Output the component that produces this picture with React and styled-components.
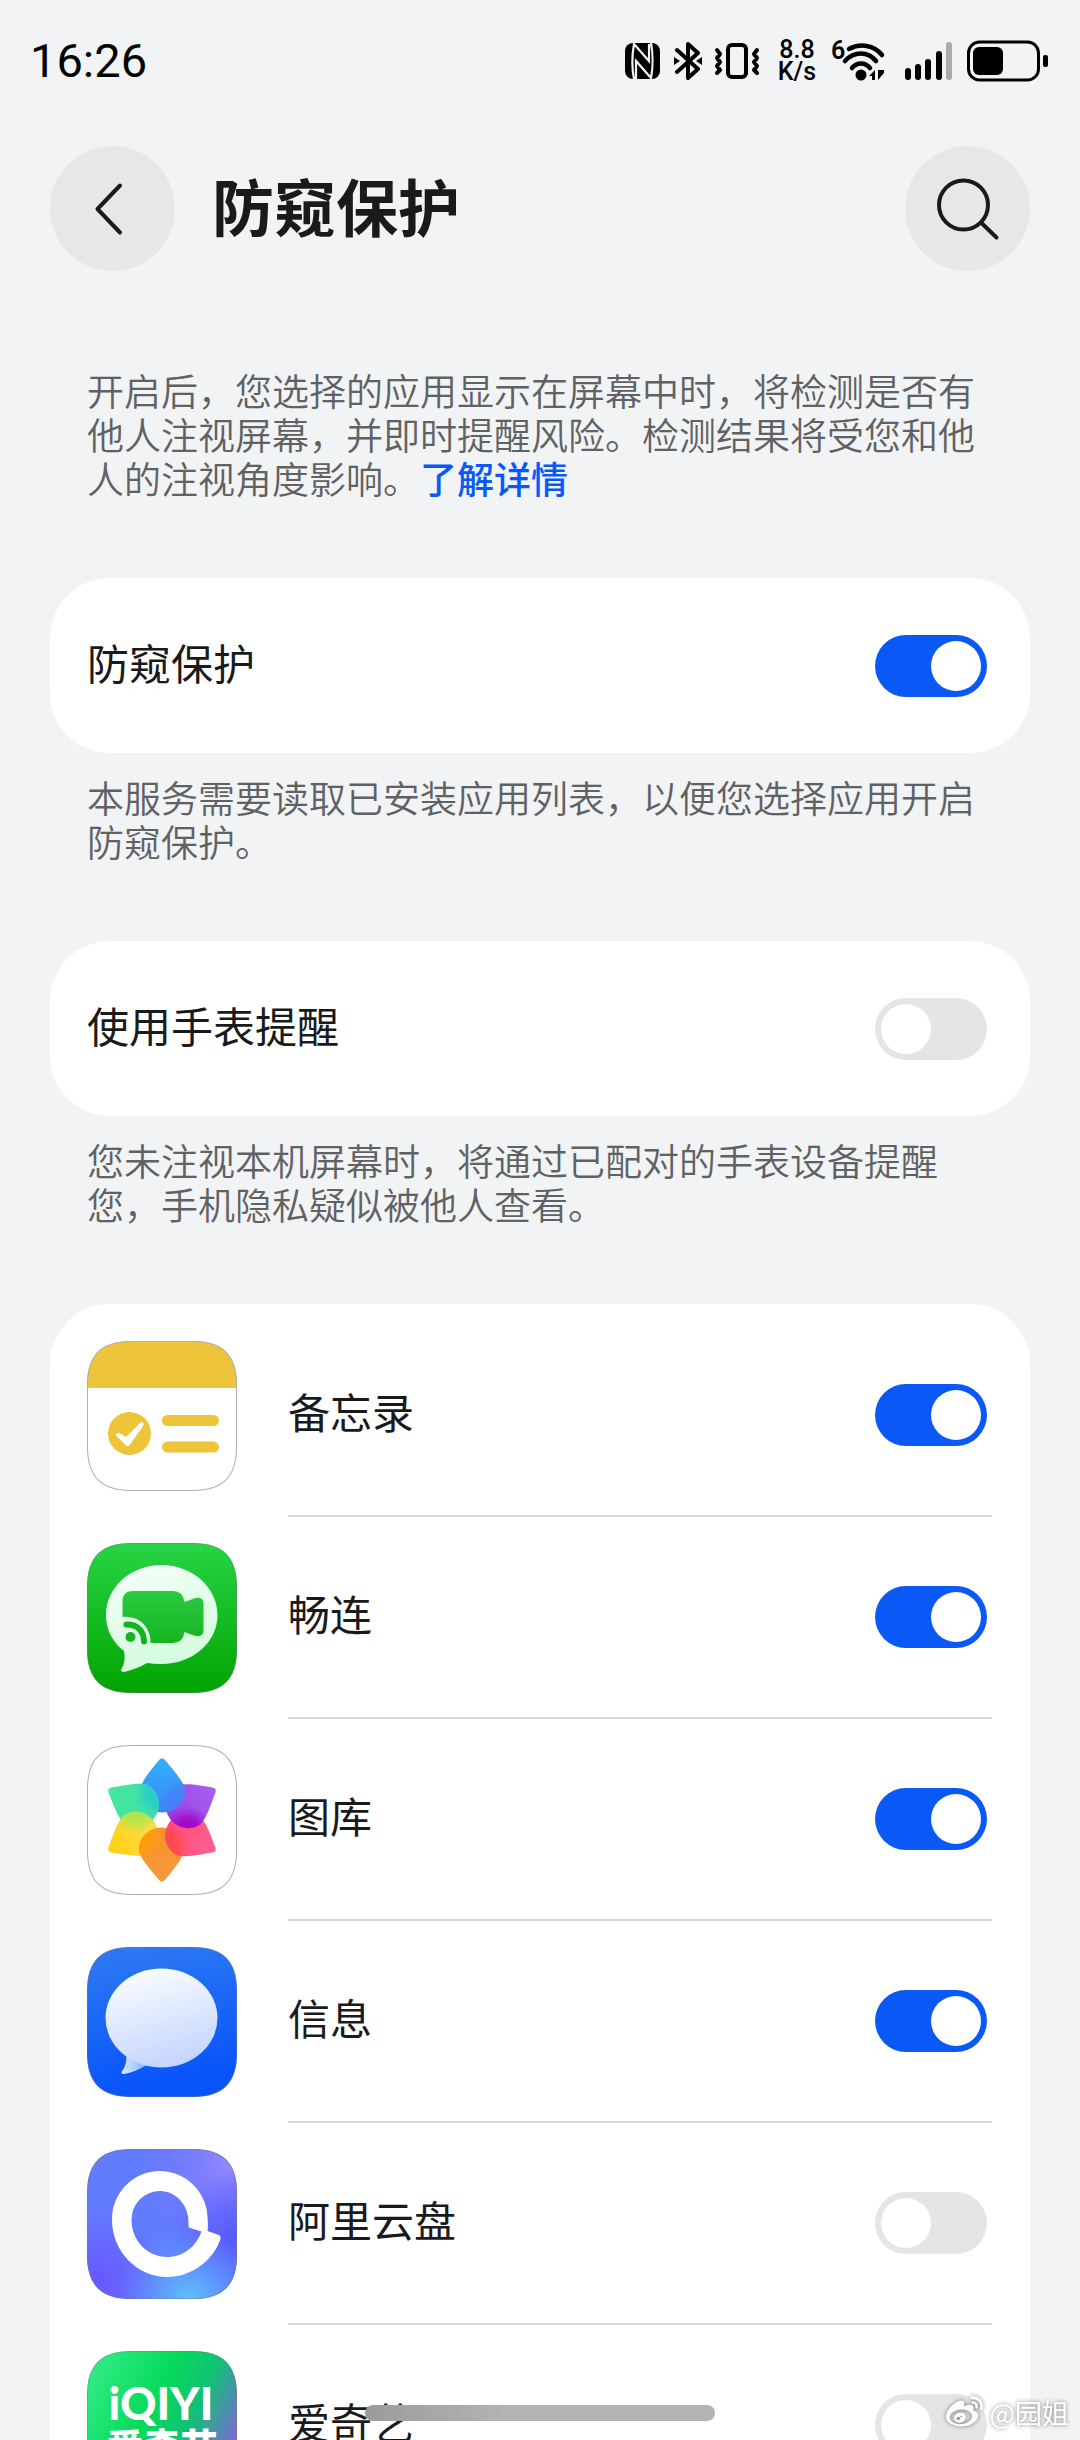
import { useState } from "react";
import { FaWeibo } from "react-icons/fa";
import styled, { createGlobalStyle } from "styled-components";

const GlobalStyle = createGlobalStyle`
	* {
		box-sizing: border-box;
	}

	body {
		margin: 0;
		background: #f1f3f5;
		color: #191a1c;
		font-family: Roboto, "Noto Sans CJK SC", sans-serif;
	}

	h1,
	p,
	ul {
		margin: 0;
		padding: 0;
	}
`;

const Screen = styled.div`
	position: relative;
	display: flex;
	flex-direction: column;
	height: 100vh;
	overflow: hidden;
`;

const StatusBar = styled.div`
	display: flex;
	align-items: center;
	justify-content: space-between;
	height: 122px;
	flex-shrink: 0;
	padding: 0 31px 0 30px;
	color: #000;
`;
const Clock = styled.time`
	font-size: 47px;
	line-height: 56px;
`;
const StatusIcons = styled.div`
	display: flex;
	align-items: center;

	& svg {
		display: block;
	}
`;
const NetSpeed = styled.div`
	width: 40px;
	margin: 0 15px 0 17px;
	font-size: 25px;
	line-height: 22px;
	text-align: center;
	font-weight: 500;
`;

const Header = styled.header`
	display: flex;
	align-items: center;
	flex-shrink: 0;
	gap: 37px;
	padding: 24px 50px 0;
`;
const Title = styled.h1`
	flex: 1;
	padding-bottom: 8px;
	font-family: "Noto Sans CJK SC", sans-serif;
	font-size: 62px;
	font-weight: 700;
	line-height: 72px;
`;
const RoundButton = styled.button`
	display: flex;
	align-items: center;
	justify-content: center;
	width: 125px;
	height: 125px;
	padding: 0;
	border: none;
	border-radius: 50%;
	background: #e6e7e9;
	cursor: pointer;
`;

const Content = styled.main`
	flex: 1;
	min-height: 0;
	overflow-y: auto;
	padding: 97px 50px 0;
	scrollbar-width: none;
	font-family: "Noto Sans CJK SC", sans-serif;
`;
const Note = styled.p`
	padding: 0 37px;
	margin-bottom: 78px;
	color: #606163;
	font-size: 37px;
	line-height: 44px;
	font-weight: 350;

	& a {
		color: #0a59f7;
		font-weight: 500;
		text-decoration: none;
	}
`;
const Label = styled.span`
	padding-bottom: 8px;
	font-size: 42px;
	line-height: 56px;
`;
const Card = styled.label`
	display: flex;
	align-items: center;
	justify-content: space-between;
	height: 175px;
	margin-bottom: 22px;
	padding: 0 43px 0 37px;
	border-radius: 60px;
	background: #fff;
	cursor: pointer;
`;

const AppList = styled.ul`
	padding: 11px 38px 37px 37px;
	border-radius: 60px;
	background: #fff;
	list-style-type: none;
`;
const AppRow = styled.li`
	& label {
		display: flex;
		align-items: center;
		gap: 51px;
		cursor: pointer;
	}

	& svg {
		flex-shrink: 0;
		width: 150px;
		height: 150px;
	}
`;
const AppInfo = styled.div`
	display: flex;
	flex: 1;
	align-items: center;
	justify-content: space-between;
	height: 202px;
	padding-right: 5px;
	border-bottom: 2px solid #d8d8d9;

	${AppRow}:last-child & {
		border-color: transparent;
	}
`;

const Switch = styled.input`
	appearance: none;
	display: flex;
	flex-shrink: 0;
	width: 112px;
	height: 62px;
	margin: 0;
	padding: 6px;
	border-radius: 31px;
	background: #e5e5e5;
	cursor: pointer;

	&::before {
		content: "";
		width: 50px;
		height: 50px;
		border-radius: 50%;
		background: #fff;
	}

	&:checked {
		justify-content: flex-end;
		background: #0a59f7;
	}
`;

const HomeIndicator = styled.div`
	position: absolute;
	bottom: 19px;
	left: 50%;
	width: 350px;
	height: 16px;
	border-radius: 8px;
	background: linear-gradient(90deg, #9b9b9b, #b3b3b3 40%);
	transform: translateX(-50%);
`;
const Watermark = styled.div`
	position: absolute;
	right: 11px;
	bottom: 9px;
	display: flex;
	align-items: center;
	gap: 6px;
	color: #fff;
	font-family: "Noto Sans CJK SC", sans-serif;
	font-size: 27px;
	line-height: 36px;
	filter: drop-shadow(0 0 2px rgba(0, 0, 0, 0.5));
`;

function NfcIcon() {
	return (
		<svg width="35" height="36" viewBox="0 0 35 36">
			<rect width="35" height="36" rx="8" />
			<path
				d="M9 36C7 26 7 12 9 1L24 18V1M26 0C28 10 28 25 26 35L11 18V36"
				fill="none"
				stroke="#f1f3f5"
				strokeWidth="2.2"
			/>
		</svg>
	);
}

function BluetoothIcon() {
	return (
		<svg width="28" height="38" viewBox="0 0 28 38" style={{ marginLeft: 14 }}>
			<path
				d="M3 8L24 27L14 36V2L24 11L3 30"
				fill="none"
				stroke="#000"
				strokeWidth="4"
				strokeLinecap="round"
				strokeLinejoin="round"
			/>
			<path d="M0 15L6 19L0 23ZM28 15L22 19L28 23Z" />
		</svg>
	);
}

function VibrateIcon() {
	return (
		<svg width="46" height="38" viewBox="0 0 46 38" style={{ marginLeft: 12 }}>
			<g
				fill="none"
				stroke="#000"
				strokeWidth="4"
				strokeLinecap="round"
				strokeLinejoin="round">
				<rect x="14" y="3" width="18" height="32" rx="4" />
				<path d="M3 8L6 12L3 16L6 20L3 24L6 28L3 31M43 8L40 12L43 16L40 20L43 24L40 28L43 31" />
			</g>
		</svg>
	);
}

function WifiIcon() {
	return (
		<svg width="54" height="44" viewBox="0 0 54 44">
			<text x="-1" y="20" fontSize="25" fontWeight="600">
				6
			</text>
			<g fill="none" stroke="#000" strokeWidth="4.5" strokeLinecap="round">
				<path d="M17 10C28 4 42 6 50 16" />
				<path d="M13 22C22 12 36 12 44 22" />
				<path d="M20 29C25 23 33 23 38 29" />
			</g>
			<circle cx="29" cy="36" r="5.5" />
			<path d="M43 31V41H40V37H37ZM46 31V41L52 34V31Z" />
		</svg>
	);
}

function SignalIcon() {
	return (
		<svg width="48" height="38" viewBox="0 0 48 38" style={{ marginLeft: 19 }}>
			<rect x="0" y="26" width="6" height="12" rx="3" />
			<rect x="10" y="22" width="6" height="16" rx="3" />
			<rect x="20" y="17" width="6" height="21" rx="3" />
			<rect x="31" y="9" width="6" height="29" rx="3" />
			<rect x="41" y="0" width="6" height="38" rx="3" fill="#a9aaab" />
		</svg>
	);
}

function BatteryIcon() {
	return (
		<svg width="82" height="42" viewBox="0 0 82 42" style={{ marginLeft: 14 }}>
			<rect
				x="1.5"
				y="2"
				width="70"
				height="38"
				rx="11"
				fill="none"
				stroke="#000"
				strokeWidth="3"
			/>
			<rect x="6" y="7" width="30" height="28" rx="6" />
			<rect x="76" y="15" width="5" height="12" rx="2" />
		</svg>
	);
}

const SHAPE =
	"M0 44C0 14 14 0 44 0H106C136 0 150 14 150 44V106C150 136 136 150 106 150H44C14 150 0 136 0 106Z";

function AppTile({ fill, border, children }) {
	return (
		<svg viewBox="0 0 150 150" aria-hidden="true">
			<clipPath id="tile">
				<path d={SHAPE} />
			</clipPath>
			<g clipPath="url(#tile)">
				<rect width="150" height="150" fill={fill} />
				{children}
				<path
					d={SHAPE}
					fill="none"
					stroke={border || "rgba(120,120,120,0.4)"}
					strokeWidth="2"
				/>
			</g>
		</svg>
	);
}

function NotesIcon() {
	return (
		<AppTile fill="#fff" border="#b0b0b0">
			<path d="M0 0H150V47H0Z" fill="#eec43a" />
			<circle cx="42.5" cy="92.5" r="21.5" fill="#eec43a" />
			<path
				d="M28.5 94Q30 91 33 92.5L39 96L52.5 82.5Q55 80 56.5 82Q57 84 55.5 86L43 103.5Q40.5 106.5 38 103.5Z"
				fill="#fff"
			/>
			<rect x="75" y="74" width="57" height="11" rx="5.5" fill="#eec43a" />
			<rect x="75" y="100.5" width="57" height="11" rx="5.5" fill="#eec43a" />
		</AppTile>
	);
}

function MeetIcon() {
	return (
		<AppTile fill="url(#meet-bg)">
			<defs>
				<linearGradient id="meet-bg" x2="0" y2="1">
					<stop stopColor="#27d546" />
					<stop offset="1" stopColor="#02a300" />
				</linearGradient>
				<linearGradient id="meet-bubble" x2="0.3" y2="1">
					<stop stopColor="#fff" />
					<stop offset="0.25" stopColor="#ecfff1" />
					<stop offset="1" stopColor="#d5fbdf" />
				</linearGradient>
				<linearGradient id="meet-cam" x2="0" y2="1">
					<stop stopColor="#2bcb42" />
					<stop offset="1" stopColor="#15b420" />
				</linearGradient>
			</defs>
			<path
				d="M60 120Q50 126 37 129Q33 129 34.5 126Q39 118 37 108C25 99 19 86 19 72C19 44 44 22 74.5 22S130.5 44 130.5 72S105 121 74.5 121Q66 121 60 120Z"
				fill="url(#meet-bubble)"
			/>
			<path
				d="M46 48H86Q96 48 97.5 59L107 55.5Q116 53 116.5 60V88Q116 95 107 92.5L97.5 89Q96 100 86 100H46Q35 99 35.5 89V59Q35.5 48 46 48Z"
				fill="url(#meet-cam)"
			/>
			<path d="M35 74C52 72 64 84 63.5 101H35Z" fill="#e2fde9" />
			<path
				d="M39.5 81.5C50 81 57 88 57 98.5"
				fill="none"
				stroke="#13b21e"
				strokeWidth="6"
				strokeLinecap="round"
			/>
			<circle cx="43.5" cy="94" r="5" fill="#13b21e" />
		</AppTile>
	);
}

const PETAL =
	"M72 15Q75 11.5 78 15C85 24 98 37 98 46A22.5 21.5 0 0 1 53 46C53 37 65 24 72 15Z";

const petals = [
	{ angle: 0, from: "#32b0fa", to: "#3a86fa", overlap: "#4480f8" },
	{ angle: 60, from: "#a65ff0", to: "#9a45e4", overlap: "#a010c8" },
	{ angle: 120, from: "#ff6290", to: "#ff4a78", overlap: "#ff4a50" },
	{ angle: 180, from: "#f59a3c", to: "#f78f2e", overlap: "#ff9b0e" },
	{ angle: 240, from: "#ffcf12", to: "#ffdf4a", overlap: "#b4e44c" },
	{ angle: 300, from: "#44e89a", to: "#3ee2aa", overlap: "#2acdc4" },
];

function GalleryIcon() {
	return (
		<AppTile fill="#fff" border="#b0b0b0">
			<defs>
				<filter id="petal-soft">
					<feGaussianBlur stdDeviation="4" />
				</filter>
				{petals.map((petal) => (
					<linearGradient
						key={petal.angle}
						id={`petal-${petal.angle}`}
						x2="0"
						y2="1">
						<stop stopColor={petal.from} />
						<stop offset="1" stopColor={petal.to} />
					</linearGradient>
				))}
				{petals.map((petal) => (
					<clipPath key={petal.angle} id={`petal-clip-${petal.angle}`}>
						<path d={PETAL} transform={`rotate(${petal.angle} 75 75)`} />
					</clipPath>
				))}
			</defs>
			{petals.map((petal) => (
				<path
					key={petal.angle}
					d={PETAL}
					fill={`url(#petal-${petal.angle})`}
					transform={`rotate(${petal.angle} 75 75)`}
				/>
			))}
			{/* every petal lies over its clockwise neighbour */}
			{petals.map((petal) => (
				<g
					key={petal.angle}
					clipPath={`url(#petal-clip-${(petal.angle + 60) % 360})`}>
					<path
						d={PETAL}
						fill={`url(#petal-${petal.angle})`}
						transform={`rotate(${petal.angle} 75 75)`}
					/>
				</g>
			))}
			{petals.map((petal) => (
				<g key={petal.angle} clipPath={`url(#petal-clip-${petal.angle})`}>
					<path
						d={PETAL}
						fill={petal.overlap}
						filter="url(#petal-soft)"
						transform={`rotate(${petal.angle + 60} 75 75)`}
					/>
				</g>
			))}
		</AppTile>
	);
}

function MessagesIcon() {
	return (
		<AppTile fill="url(#msg-bg)">
			<defs>
				<linearGradient id="msg-bg" x2="0.2" y2="1">
					<stop stopColor="#2f7bf3" />
					<stop offset="1" stopColor="#0853fa" />
				</linearGradient>
				<linearGradient id="msg-bubble" x1="0.3" x2="0.6" y2="1">
					<stop stopColor="#fafdff" />
					<stop offset="1" stopColor="#c3d4fd" />
				</linearGradient>
				<linearGradient id="msg-tail">
					<stop stopColor="#d9eaff" />
					<stop offset="1" stopColor="#7db4fb" />
				</linearGradient>
			</defs>
			<path
				d="M39 105Q41 117 34.5 125Q34 127 37 127Q49 125 61 117Z"
				fill="url(#msg-tail)"
			/>
			<ellipse cx="74.5" cy="71" rx="56" ry="49.5" fill="url(#msg-bubble)" />
		</AppTile>
	);
}

function DriveIcon() {
	return (
		<AppTile fill="#627cfd">
			<defs>
				<radialGradient id="drive-violet" cx="0.95" cy="0.1" r="0.6">
					<stop stopColor="#9488ff" />
					<stop offset="1" stopColor="#7a70ff" stopOpacity="0" />
				</radialGradient>
				<radialGradient id="drive-indigo" cx="1" cy="0.6" r="0.45">
					<stop stopColor="#5757ff" />
					<stop offset="1" stopColor="#5d5dff" stopOpacity="0" />
				</radialGradient>
				<radialGradient id="drive-left" cx="0.05" cy="0.9" r="0.5">
					<stop stopColor="#6a55ff" />
					<stop offset="1" stopColor="#6a55ff" stopOpacity="0" />
				</radialGradient>
				<radialGradient id="drive-sky" cx="0.68" cy="1" r="0.48">
					<stop stopColor="#5fc0ff" />
					<stop offset="1" stopColor="#5a9cff" stopOpacity="0" />
				</radialGradient>
			</defs>
			<rect width="150" height="150" fill="url(#drive-violet)" />
			<rect width="150" height="150" fill="url(#drive-indigo)" />
			<rect width="150" height="150" fill="url(#drive-left)" />
			<rect width="150" height="150" fill="url(#drive-sky)" />
			<path
				fill="#fff"
				fillRule="evenodd"
				d="M120.5 82C121 77 121 73 120.5 68A48 48 0 0 0 73 22A48 48 0 0 0 25 71C25 102 50 128 80 128C104 128 126 112 133.5 90Q134 87 132 86ZM73 42A28.5 28.5 0 0 0 44.5 71C44.5 91 60 108 80 108C96 108 109 98 114.5 82.5L103 79Q101 78.5 101.5 76C103 58 90 42 73 42Z"
			/>
		</AppTile>
	);
}

function VideoIcon() {
	return (
		<AppTile fill="url(#video-bg)">
			<defs>
				<linearGradient id="video-bg" x1="0" y1="0.1" x2="1" y2="0.6">
					<stop stopColor="#34ec88" />
					<stop offset="0.45" stopColor="#06da5a" />
					<stop offset="0.7" stopColor="#12c077" />
					<stop offset="1" stopColor="#8064d8" />
				</linearGradient>
			</defs>
			<g fill="#fff" textAnchor="middle">
				<text x="74" y="69" fontFamily="Lato" fontSize="45" fontWeight="900">
					iQIYI
				</text>
				<text
					x="75"
					y="110"
					fontFamily="Noto Sans CJK SC"
					fontSize="37"
					fontWeight="900">
					爱奇艺
				</text>
			</g>
		</AppTile>
	);
}

const appItems = [
	{ id: "notes", name: "备忘录", Icon: NotesIcon, on: true },
	{ id: "meetime", name: "畅连", Icon: MeetIcon, on: true },
	{ id: "gallery", name: "图库", Icon: GalleryIcon, on: true },
	{ id: "messages", name: "信息", Icon: MessagesIcon, on: true },
	{ id: "drive", name: "阿里云盘", Icon: DriveIcon, on: false },
	{ id: "iqiyi", name: "爱奇艺", Icon: VideoIcon, on: false },
];

function App() {
	const [guard, setGuard] = useState(true);
	const [watch, setWatch] = useState(false);
	const [apps, setApps] = useState(appItems);

	function toggleApp(id) {
		setApps((apps) =>
			apps.map((app) => (app.id === id ? { ...app, on: !app.on } : app))
		);
	}

	return (
		<Screen>
			<GlobalStyle />
			<StatusBar>
				<Clock>16:26</Clock>
				<StatusIcons>
					<NfcIcon />
					<BluetoothIcon />
					<VibrateIcon />
					<NetSpeed>
						<div>8.8</div>
						<div>K/s</div>
					</NetSpeed>
					<WifiIcon />
					<SignalIcon />
					<BatteryIcon />
				</StatusIcons>
			</StatusBar>
			<Header>
				<RoundButton aria-label="返回">
					<svg width="60" height="60" viewBox="0 0 60 60">
						<path
							d="M37 6.5L14.5 30L37 53.5"
							fill="none"
							stroke="#191a1c"
							strokeWidth="4"
							strokeLinecap="round"
							strokeLinejoin="round"
						/>
					</svg>
				</RoundButton>
				<Title>防窥保护</Title>
				<RoundButton aria-label="搜索">
					<svg width="70" height="70" viewBox="0 0 70 70">
						<g fill="none" stroke="#191a1c" strokeWidth="4" strokeLinecap="round">
							<circle cx="30.5" cy="31" r="24.5" />
							<path d="M48.5 49L63.5 63.5" />
						</g>
					</svg>
				</RoundButton>
			</Header>
			<Content>
				<Note>
					开启后，您选择的应用显示在屏幕中时，将检测是否有他人注视屏幕，并即时提醒风险。检测结果将受您和他人的注视角度影响。
					<a href="#details">了解详情</a>
				</Note>
				<Card>
					<Label>防窥保护</Label>
					<Switch
						type="checkbox"
						role="switch"
						checked={guard}
						onChange={() => setGuard((on) => !on)}
					/>
				</Card>
				<Note>本服务需要读取已安装应用列表，以便您选择应用开启防窥保护。</Note>
				<Card>
					<Label>使用手表提醒</Label>
					<Switch
						type="checkbox"
						role="switch"
						checked={watch}
						onChange={() => setWatch((on) => !on)}
					/>
				</Card>
				<Note>
					您未注视本机屏幕时，将通过已配对的手表设备提醒您，手机隐私疑似被他人查看。
				</Note>
				<AppList>
					{apps.map(({ id, name, Icon, on }) => (
						<AppRow key={id}>
							<label>
								<Icon />
								<AppInfo>
									<Label>{name}</Label>
									<Switch
										type="checkbox"
										role="switch"
										checked={on}
										onChange={() => toggleApp(id)}
									/>
								</AppInfo>
							</label>
						</AppRow>
					))}
				</AppList>
			</Content>
			<HomeIndicator />
			<Watermark>
				<FaWeibo size={37} />
				<span>@园姐</span>
			</Watermark>
		</Screen>
	);
}

export default App;
